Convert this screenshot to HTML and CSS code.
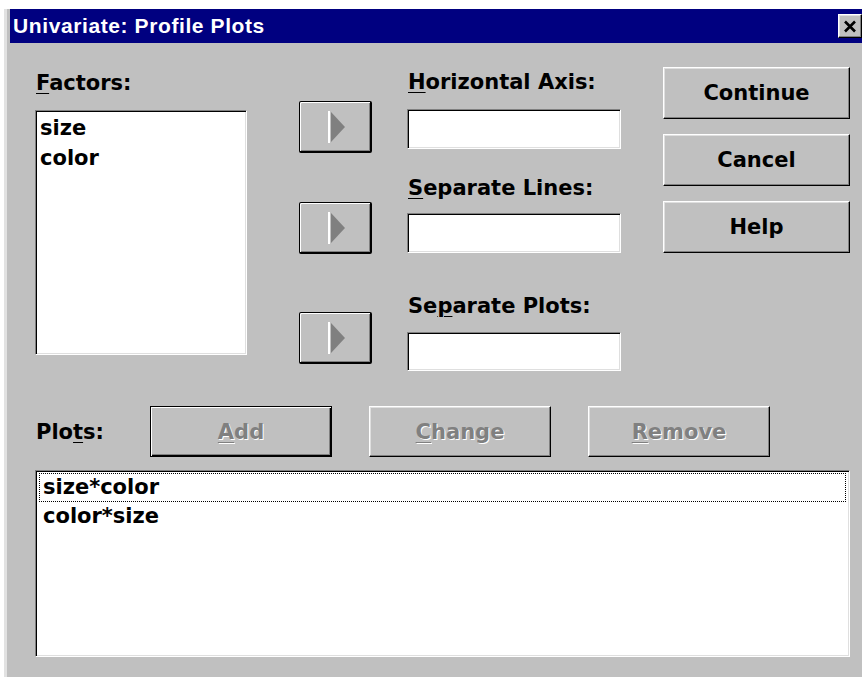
FILE: index.html
```html
<!DOCTYPE html>
<html lang="en">
<head>
<meta charset="utf-8">
<title>Univariate: Profile Plots</title>
<link rel="stylesheet" href="styles.css">
</head>
<body>
<div class="window">
  <div class="titlebar">
    <span class="title">Univariate: Profile Plots</span>
    <button class="close" type="button" aria-label="Close">
      <svg width="14" height="13" viewBox="0 0 14 13"><path d="M2 1.5 L12 11.5 M12 1.5 L2 11.5" stroke="#000" stroke-width="2.6" fill="none"/></svg>
    </button>
  </div>

  <div class="client">
    <div class="top">
      <div class="col factors">
        <div class="label"><u>F</u>actors:</div>
        <div class="sunken listbox">
          <div class="item">size</div>
          <div class="item">color</div>
        </div>
      </div>

      <div class="col arrows">
        <button class="arrow a1" type="button"><svg width="18" height="32" viewBox="0 0 18 32"><rect x="0" y="0" width="2" height="32" fill="#fff"/><polygon points="3,1 17,16 3,31" fill="#808080"/></svg></button>
        <button class="arrow a2" type="button"><svg width="18" height="32" viewBox="0 0 18 32"><rect x="0" y="0" width="2" height="32" fill="#fff"/><polygon points="3,1 17,16 3,31" fill="#808080"/></svg></button>
        <button class="arrow a3" type="button"><svg width="18" height="32" viewBox="0 0 18 32"><rect x="0" y="0" width="2" height="32" fill="#fff"/><polygon points="3,1 17,16 3,31" fill="#808080"/></svg></button>
      </div>

      <div class="col targets">
        <div class="label"><u>H</u>orizontal Axis:</div>
        <div class="sunken field f1"></div>
        <div class="label l2"><u>S</u>eparate Lines:</div>
        <div class="sunken field f2"></div>
        <div class="label l3">Se<u>p</u>arate Plots:</div>
        <div class="sunken field f3"></div>
      </div>

      <div class="col actions">
        <button class="btn" type="button">Continue</button>
        <button class="btn" type="button">Cancel</button>
        <button class="btn" type="button">Help</button>
      </div>
    </div>

    <div class="plotrow">
      <div class="label plots">Plo<u>t</u>s:</div>
      <button class="btn wide default disabled" type="button"><u>A</u>dd</button>
      <button class="btn wide disabled" type="button"><u>C</u>hange</button>
      <button class="btn wide disabled" type="button"><u>R</u>emove</button>
    </div>

    <div class="sunken plotlist">
      <div class="item focused">size*color</div>
      <div class="item">color*size</div>
    </div>
  </div>
</div>
</body>
</html>
```

FILE: styles.css
```css
* {
  box-sizing: border-box;
}

html, body {
  margin: 0;
  padding: 0;
  background: #ffffff;
  overflow: hidden;
}

.window {
  margin: 9px 0 0 4px;
  width: 858px;
  height: 668px;
  background: #c0c0c0;
  border-left: 3px solid #e2e2e2;
  overflow: hidden;
}

/* caption */
.titlebar {
  height: 34px;
  margin-left: 3px;
  background: #000080;
  display: flex;
  align-items: center;
  justify-content: space-between;
  overflow: hidden;
}

.title {
  color: #ffffff;
  font-family: "Liberation Sans", Arial, sans-serif;
  font-weight: bold;
  font-size: 21px;
  letter-spacing: 0.6px;
  padding-left: 3px;
  line-height: 34px;
}

.close {
  width: 24px;
  height: 24px;
  padding: 0;
  background: #c0c0c0;
  border: 1px solid;
  border-color: #ffffff #000000 #000000 #ffffff;
  box-shadow: inset -1px -1px #808080, inset 1px 1px #dfdfdf;
  display: flex;
  align-items: center;
  justify-content: center;
}

/* client area */
.client {
  padding-left: 28px;
  font-family: "DejaVu Sans", Verdana, sans-serif;
  font-weight: bold;
  font-size: 21px;
  color: #000;
}

.top {
  display: flex;
  height: 332px;
}

.col {
  display: flex;
  flex-direction: column;
}

.label {
  height: 24px;
  line-height: 24px;
  white-space: nowrap;
  padding-left: 1px;
}

.label u,
.btn u {
  text-decoration-thickness: 1px;
  text-underline-offset: 3px;
}

/* sunken white fields */
.sunken {
  background: #ffffff;
  border: 1px solid;
  border-color: #808080 #ffffff #ffffff #808080;
  box-shadow: inset 1px 1px #000000, inset -1px -1px #dfdfdf;
}

.factors {
  width: 212px;
  padding-top: 28px;
  margin-right: 52px;
}

.factors .label {
  margin-bottom: 15px;
}

.listbox {
  height: 245px;
  padding: 2px 4px;
}

.item {
  line-height: 30px;
  height: 30px;
  white-space: nowrap;
}

/* arrow buttons */
.arrows {
  width: 73px;
  padding-top: 58px;
  margin-right: 35px;
}

.arrow {
  height: 52px;
  width: 73px;
  padding: 0 0 0 4px;
  background: #c0c0c0;
  border: 1px solid #000;
  border-right-width: 2px;
  border-bottom-width: 2px;
  border-radius: 2px;
  box-shadow: inset 1px 1px #ffffff, inset -1px -1px #808080;
  display: flex;
  align-items: center;
  justify-content: center;
}

.a2 { margin-top: 49px; }
.a3 { margin-top: 58px; }

/* target fields */
.targets {
  width: 214px;
  padding-top: 27px;
  margin-right: 42px;
}

.targets .label { margin-bottom: 15px; }
.targets .l2 { margin-top: 27px; margin-bottom: 13px; }
.targets .l3 { margin-top: 41px; margin-bottom: 14px; }

.field {
  height: 40px;
}

.f3 { height: 39px; }

/* push buttons */
.actions {
  width: 187px;
  padding-top: 24px;
  gap: 15px;
}

.btn {
  height: 52px;
  background: #c0c0c0;
  font: inherit;
  color: #000;
  border: 1px solid;
  border-color: #ffffff #000000 #000000 #ffffff;
  box-shadow: inset -1px -1px #808080, inset 1px 1px #dfdfdf;
  padding: 0;
  text-align: center;
}

.btn.disabled {
  color: #808080;
  text-shadow: 1px 1px 0 #ffffff;
}

.btn.default {
  border: 1px solid #000;
  box-shadow: inset 1px 1px #ffffff, inset -1px -1px #000000, inset -2px -2px #808080;
}

/* plots row */
.plotrow {
  margin-top: 31px;
  display: flex;
  align-items: center;
  height: 51px;
}

.plots {
  width: 115px;
}

.wide {
  width: 182px;
  height: 51px;
}

.wide + .wide {
  margin-left: 37px;
}

.plotlist {
  margin-top: 13px;
  width: 815px;
  height: 187px;
  padding: 2px 3px;
}

.plotlist .item {
  height: 29px;
  line-height: 27px;
  padding-left: 3px;
  border: 1px solid transparent;
}

.plotlist .focused {
  border: 1px dotted #000;
}
```
